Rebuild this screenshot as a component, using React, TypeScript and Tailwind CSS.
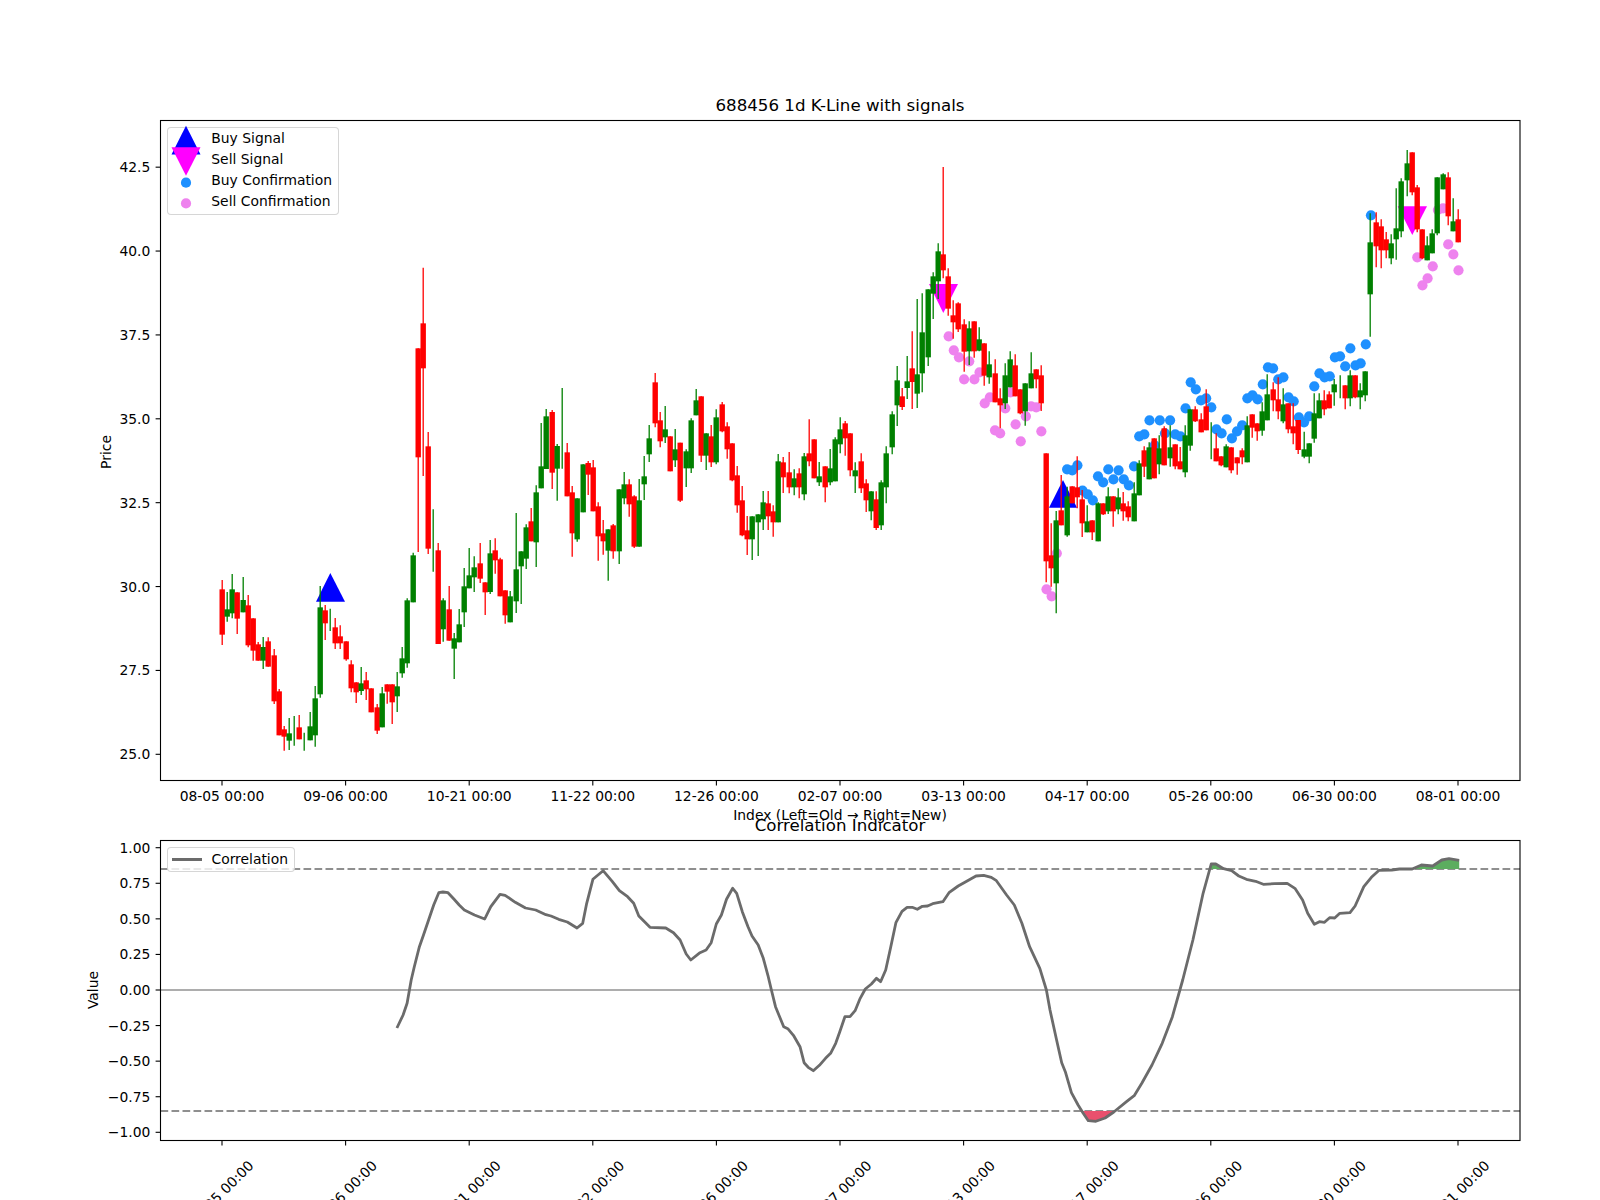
// Candle rows were read off 3x crops of the chart: "colour bodyTop bodyBottom wickTop wickBottom"
const parseRows = (y0: number, rows: string) =>
  rows
    .trim()
    .split('\n')
    .map(line => {
      const [c, top, bot, hi, lo] = line.trim().split(' ');
      const y = (v: string) => y0 + Number(v) / 3;
      return { up: c === 'g', top: y(top), bot: y(bot), hi: y(hi), lo: y(lo) };
    });

const candles = [
  ...parseRows(380, `r 628 764 600 795
g 688 710 636 725
g 628 700 582 715
r 637 716 637 762
g 660 697 591 697
r 676 796 645 802
r 715 812 715 842
r 793 842 786 842
g 801 842 771 867
r 784 860 772 860
r 826 964 807 972
r 934 1066 927 1066
r 1048 1070 1038 1112
g 1060 1082 1014 1110
g 1060 1060 1008 1097
r 1042 1078 1005 1078
g 1085 1085 1058 1112
g 1039 1081 996 1081
g 955 1066 918 1100
g 682 943 618 953
r 691 730 675 780
g 720 720 686 753
r 742 790 714 807
r 769 790 736 807
r 784 838 784 842
r 853 925 841 937
r 907 937 907 969
g 910 933 861 945
r 901 928 876 960
r 925 997 925 997
r 982 1052 972 1062
g 940 1042 921 1042
r 913 935 913 971
r 913 967 913 1032
g 919 949 876 996
g 835 880 801 893
g 661 850 655 863
g 526 667 518 667
r -95 232 -95 516
r -170 -35 -337 288
r 199 506 156 522
g 480 480 388 575
r 511 792 489 792
g 661 748 655 785
r 688 782 618 782
g 775 806 759 897
g 733 787 687 787
g 619 697 564 741
g 586 625 504 625
g 562 592 529 636
r 550 596 489 609
r 607 637 607 705
g 520 636 480 642
r 511 541 475 581
r 538 649 533 649
r 631 706 631 731
g 649 727 633 727
g 568 664 399 699
g 514 559 514 672
g 442 536 433 567
r 424 484 384 484
g 337 487 316 561
g 259 325 129 325
g 109 267 87 267`),
  ...parseRows(340, `r 216 398 210 447
g 318 386 312 482
g 384 384 144 386
r 337 469 309 469
r 457 580 438 650
g 475 598 475 605
g 373 517 373 517
r 369 404 363 465
r 382 514 360 514
r 499 589 487 662
r 580 604 540 644
g 568 632 568 722
r 556 634 552 656
g 448 634 448 672
g 433 475 396 493
r 433 493 418 530
r 469 620 466 624
g 481 620 417 620
g 409 433 348 480
g 295 343 255 366
r 127 250 99 262
r 241 304 216 322
g 268 292 198 309
r 289 394 289 394
g 328 361 267 381
r 308 482 308 486
g 334 385 328 441
g 241 385 235 399
g 181 226 147 226
r 169 347 169 366
g 280 347 280 390
r 289 367 255 381
g 232 367 208 373
r 193 274 186 277
r 259 328 247 356
r 310 421 310 424
r 406 496 378 518
r 481 586 438 589
r 571 598 528 645
g 529 598 529 660
g 523 547 523 648
g 487 538 453 570
r 490 529 453 570
r 514 547 496 590
g 364 547 342 547
r 367 412 351 459
r 397 442 336 460
g 415 442 388 466
r 400 442 385 475
g 349 463 339 481
r 340 364 238 379
r 298 415 298 415
g 409 427 366 438
r 379 442 379 487
g 385 427 327 436
g 298 424 292 424
g 268 313 232 340
r 250 295 243 347
r 280 391 280 409
g 391 409 367 459
r 364 445 340 459
r 430 481 418 516
g 454 514 454 541
r 478 564 454 570
g 427 556 421 570
g 340 442 319 490
g 223 322 214 343
g 121 196 78 258`),
  ...parseRows(150, `r 739 771 714 780
g 694 714 618 747
r 655 696 544 777
g 673 731 447 774
g 547 670 430 727
g 418 622 418 648
g 379 431 367 507
g 304 394 280 447
r 313 361 51 385
r 379 476 355 497
r 496 517 451 566
r 460 538 457 546
r 523 605 508 665
g 535 604 514 645
r 514 604 514 623
g 568 602 532 604
r 580 677 580 707
g 643 682 604 701
r 670 757 628 757
r 745 766 715 835
g 676 760 640 777
g 628 712 604 712
r 646 739 613 739
r 718 790 718 793
g 700 784 700 827
g 670 715 607 715
r 658 688 658 715
r 676 760 646 783`),
  ...parseRows(340, `r 340 664 340 727
r 646 685 550 740
g 541 730 513 820
r 511 556 405 556
g 469 586 440 590
r 439 490 439 490
r 442 472 349 505
r 478 550 450 591
g 544 577 496 577
r 541 577 541 600
g 490 604 487 604
r 490 523 490 525
g 469 514 442 522
r 469 514 469 560
g 472 508 445 523
r 490 514 456 542
r 499 532 484 544
g 460 544 427 544
g 370 466 361 466
r 331 380 319 411
g 322 418 307 418
r 295 415 295 415
g 325 373 286 403
r 265 376 259 376
g 322 355 256 380
r 313 379 313 388
r 364 388 321 388
g 286 397 256 412
g 208 317 208 332
r 208 244 199 246
r 238 277 220 277
r 199 271 148 271
g 300 300 247 358
r 325 364 280 364
r 349 376 349 379
g 319 382 313 382
r 322 391 322 400
r 352 370 352 404
r 331 352 325 373`),
  ...parseRows(130, `g 886 997 859 997
r 853 893 853 923
r 880 904 880 932
g 844 902 817 917
g 793 871 733 871
r 778 811 757 844
r 808 844 742 868
g 823 874 775 880
r 820 898 820 910
r 889 910 820 943
r 870 960 870 972
g 958 980 905 985
g 940 980 940 1000
g 850 926 790 938
g 811 865 790 865
r 811 838 781 856
r 793 835 784 835
g 763 787 747 827
g 770 770 736 805
r 766 805 766 838
g 736 805 721 829
r 736 802 736 805
g 781 802 760 838
g 724 796 724 814
g 337 493 250 620
r 277 349 247 412
r 289 361 268 415
r 328 361 306 385
g 340 385 313 403
g 295 328 175 389
g 154 304 145 322
g 100 151 60 199
r 67 187 67 196
r 172 298 165 307
r 298 385 298 388
g 346 391 319 391
g 310 370 298 370
g 142 310 142 316
g 133 178 130 178
r 142 259 127 286
g 274 304 205 304
r 268 337 238 337`),
];

const barX = (i: number) => 222 + 5.15 * i;

const dots = (start: number, y0: number, ys: number[]) =>
  ys.map((y, k) => ({ x: barX(start + k), y: y0 + y / 3 }));

const sellDots = [
  ...dots(141, 150, [559, 601, 622, 688, 634, 688, 667, 760, 742, 841, 850, 775, 727, 823, 874, 799, 769, 772, 844]),
  ...dots(160, 340, [748, 769, 640]),
  ...dots(232, 130, [382, 466, 445, 409, 240, 235, 343, 373, 421]),
];

const buyDots = [
  ...dots(164, 340, [388, 391, 376, 452, 463, 481, 409, 427, 388, 418, 391, 418, 436, 379, 289, 283, 241, 316, 241, 280, 241, 283, 289, 205, 127, 148, 181, 175, 202, 268, 280, 238, 295, 274, 256]),
  ...dots(199, 130, [805, 796, 808, 763, 712, 715, 748, 742, 802, 814, 862, 877, 859, 769, 730, 742, 739, 682, 679, 709, 655, 706, 700, 643, 256]),
];

// crop scale: 1.96x across, 3x down
const curvePoint = (x0: number) => ([x, y]: number[]) => `${(x0 + x / 1.96).toFixed(1)},${(790 + y / 3).toFixed(1)}`;

const corrPoints = [
  ...[
    [778, 714], [790, 675], [798, 640], [806, 570], [812, 530], [822, 470], [830, 435], [840, 390], [850, 345], [860, 308],
    [868, 306], [878, 308], [890, 328], [900, 345], [910, 360], [930, 375], [950, 387], [962, 350], [980, 313], [990, 316],
    [1010, 337], [1030, 354], [1050, 360], [1070, 374], [1080, 378], [1095, 388], [1112, 396], [1131, 414], [1142, 400],
    [1150, 340], [1162, 268], [1182, 242], [1200, 274], [1214, 302], [1230, 320], [1242, 340], [1252, 378], [1274, 412],
    [1305, 414], [1320, 428], [1333, 450], [1345, 492], [1354, 510], [1372, 488], [1384, 480], [1394, 458], [1404, 402],
    [1414, 375], [1424, 328], [1436, 295], [1444, 310], [1455, 365], [1466, 410], [1474, 438], [1486, 465], [1496, 505],
    [1505, 556], [1512, 600], [1520, 650], [1528, 680], [1536, 710], [1544, 716], [1555, 736],
  ].map(curvePoint(0)),
  ...[
    [0, 770], [8, 818], [16, 832], [26, 842], [38, 826], [50, 805], [60, 790], [70, 760], [78, 725], [88, 680], [98, 680],
    [108, 662], [118, 625], [128, 597], [140, 582], [150, 565], [158, 575], [168, 540], [178, 470], [188, 398], [200, 364],
    [210, 352], [220, 352], [230, 358], [240, 349], [250, 348], [260, 341], [280, 335], [292, 308], [310, 288], [325, 275],
    [345, 258], [360, 256], [375, 262], [385, 272], [405, 315], [420, 345], [435, 400], [450, 470], [470, 535], [483, 600],
    [490, 660], [503, 750], [513, 818], [520, 845], [532, 908], [545, 945], [555, 970], [565, 992], [580, 994], [598, 984],
    [615, 966], [640, 935], [655, 917], [670, 880], [690, 825], [710, 760], [730, 680], [750, 570], [770, 450], [790, 310],
    [806, 222], [815, 222], [830, 236], [846, 242], [860, 258], [875, 268], [893, 274], [908, 283], [930, 281], [955, 280],
    [970, 295], [985, 330], [995, 370], [1008, 403], [1018, 395], [1028, 397], [1038, 383], [1048, 384], [1058, 370],
    [1078, 368], [1088, 348], [1105, 290], [1120, 262], [1135, 241], [1160, 240], [1175, 237], [1200, 237], [1218, 225],
    [1240, 228], [1258, 210], [1272, 206], [1292, 211],
  ].map(curvePoint(800)),
].join(' ');

const dates = ['08-05', '09-06', '10-21', '11-22', '12-26', '02-07', '03-13', '04-17', '05-26', '06-30', '08-01'];
const priceTicks = [25, 27.5, 30, 32.5, 35, 37.5, 40, 42.5];
const valueTicks = [1, 0.75, 0.5, 0.25, 0, -0.25, -0.5, -0.75, -1];
const priceY = (p: number) => 754.3 - (p - 25) * 33.55;
const valueY = (v: number) => 990 - 142.3 * v;
const tickX = (k: number) => barX(k * 24);
const upperBand = 869;
const lowerBand = 1111;
const firstX = corrPoints.split(',')[0];
const lastX = corrPoints.split(' ').slice(-1)[0].split(',')[0];

function Frame({ top }: { top: number }) {
  return (
    <rect x="160.5" y={top + 0.5} width="1359.5" height={top === 120 ? 660 : 300} fill="none" stroke="#000" strokeWidth="1.1" />
  );
}

function Title({ children }: { children: string }) {
  return <h2 className="h-[20px] w-[1360px] ml-[160px] text-center text-[16.67px] leading-[12px]">{children}</h2>;
}

function PricePanel() {
  return (
    <section className="relative h-[700px]">
      <svg className="block overflow-visible" width="1600" height="700" viewBox="0 120 1600 700" fontSize="13.89">
        <polygon points="330.3,573 316,601.7 345,601.7" fill="#0000ff" />
        <polygon points="1063,480 1049,507.7 1077,507.7" fill="#0000ff" />
        <polygon points="929,284 958,284 943.3,313" fill="#ff00ff" />
        <polygon points="1397.7,206.3 1427,206.3 1412.3,235" fill="#ff00ff" />
        {buyDots.map((d, k) => (
          <circle key={k} cx={d.x + 0.5} cy={d.y} r="5.1" fill="#1e90ff" />
        ))}
        {sellDots.map((d, k) => (
          <circle key={k} cx={d.x + 0.5} cy={d.y} r="5.1" fill="#ee82ee" />
        ))}
        {candles.map((c, i) => {
          const color = c.up ? '#008000' : '#ff0000';
          const x = Math.round(barX(i));
          return (
            <g key={i}>
              <line x1={x + 0.2} x2={x + 0.2} y1={c.hi} y2={c.lo} stroke={color} strokeWidth="1.3" />
              <rect x={x - 2.5} y={c.top} width="5.4" height={c.bot - c.top} fill={color} />
            </g>
          );
        })}
        <Frame top={120} />
        {dates.map((d, k) => (
          <g key={d}>
            <line x1={tickX(k)} x2={tickX(k)} y1="780.5" y2="785.4" stroke="#000" strokeWidth="1.1" />
            <text x={tickX(k)} y="801" textAnchor="middle">{d} 00:00</text>
          </g>
        ))}
        {priceTicks.map(p => (
          <g key={p}>
            <line x1="155.6" x2="160.5" y1={priceY(p)} y2={priceY(p)} stroke="#000" strokeWidth="1.1" />
            <text x="150.3" y={priceY(p) + 5} textAnchor="end">{p.toFixed(1)}</text>
          </g>
        ))}
        <text x="840" y="820" textAnchor="middle">Index (Left=Old → Right=New)</text>
        <text transform="translate(111 452) rotate(-90)" textAnchor="middle">Price</text>
      </svg>
      <div className="absolute left-[167.3px] top-[7.3px] w-[172px] h-[88px] rounded-[4px] border border-[#cccccc]/80 bg-white/80 pl-[4px] text-[13.89px] leading-[20.85px]">
        <div className="flex h-[20.85px] gap-[9px]">
          <svg className="w-[30px] h-[21px] shrink-0 overflow-visible" viewBox="0 0 30 21">
            <polygon points="14,-2.3 28.5,26.4 -0.5,26.4" fill="#0000ff" />
          </svg>
          <span>Buy Signal</span>
        </div>
        <div className="flex h-[20.85px] gap-[9px]">
          <svg className="w-[30px] h-[21px] shrink-0 overflow-visible" viewBox="0 0 30 21">
            <polygon points="-0.5,-1.85 28.5,-1.85 14,26.85" fill="#ff00ff" />
          </svg>
          <span>Sell Signal</span>
        </div>
        <div className="flex h-[20.85px] gap-[9px]">
          <svg className="w-[30px] h-[21px] shrink-0 overflow-visible" viewBox="0 0 30 21">
            <circle cx="14" cy="12.7" r="5.1" fill="#1e90ff" />
          </svg>
          <span>Buy Confirmation</span>
        </div>
        <div className="flex h-[20.85px] gap-[9px]">
          <svg className="w-[30px] h-[21px] shrink-0 overflow-visible" viewBox="0 0 30 21">
            <circle cx="14" cy="12.45" r="5.1" fill="#ee82ee" />
          </svg>
          <span>Sell Confirmation</span>
        </div>
      </div>
    </section>
  );
}

function CorrelationPanel() {
  return (
    <section className="relative h-[360px]">
      <svg className="block overflow-visible" width="1600" height="360" viewBox="0 840 1600 360" fontSize="13.89">
        <defs>
          <clipPath id="aboveBand">
            <rect x="160" y="840" width="1360" height={upperBand - 840} />
          </clipPath>
          <clipPath id="belowBand">
            <rect x="160" y={lowerBand} width="1360" height={1140 - lowerBand} />
          </clipPath>
        </defs>
        <line x1="160.5" x2="1520" y1={valueY(0)} y2={valueY(0)} stroke="#adadad" strokeWidth="2" />
        <line x1="160.5" x2="1520" y1={upperBand} y2={upperBand} stroke="#8f8f8f" strokeWidth="2" strokeDasharray="7.7 3.3" />
        <line x1="160.5" x2="1520" y1={lowerBand} y2={lowerBand} stroke="#8f8f8f" strokeWidth="2" strokeDasharray="7.7 3.3" />
        <polygon points={`${corrPoints} ${lastX},${upperBand} ${firstX},${upperBand}`} fill="#5cad5f" clipPath="url(#aboveBand)" />
        <polygon points={`${corrPoints} ${lastX},${lowerBand} ${firstX},${lowerBand}`} fill="#e9506d" clipPath="url(#belowBand)" />
        <polyline points={corrPoints} fill="none" stroke="#6b6b6b" strokeWidth="2.8" strokeLinejoin="round" />
        <Frame top={840} />
        {dates.map((d, k) => (
          <g key={d}>
            <line x1={tickX(k)} x2={tickX(k)} y1="1140.5" y2="1145.4" stroke="#000" strokeWidth="1.1" />
            <text transform={`translate(${tickX(k) - 1} 1193) rotate(-45)`} textAnchor="middle" dominantBaseline="central">
              {d} 00:00
            </text>
          </g>
        ))}
        {valueTicks.map(v => (
          <g key={v}>
            <line x1="155.6" x2="160.5" y1={valueY(v)} y2={valueY(v)} stroke="#000" strokeWidth="1.1" />
            <text x="150.3" y={valueY(v) + 5} textAnchor="end">{v.toFixed(2).replace('-', '−')}</text>
          </g>
        ))}
        <text transform="translate(98 990) rotate(-90)" textAnchor="middle">Value</text>
      </svg>
      <div className="absolute left-[167.3px] top-[7.3px] flex h-[25px] w-[128px] items-center gap-[9.5px] rounded-[4px] border border-[#cccccc]/80 bg-white/80 pl-[4.2px] text-[13.89px]">
        <div className="h-[2.8px] w-[29.5px] bg-[#6b6b6b]" />
        <span>Correlation</span>
      </div>
    </section>
  );
}

export default function App() {
  return (
    <div className="h-[1200px] w-[1600px] overflow-hidden bg-white pt-[100px] text-black font-['DejaVu_Sans',sans-serif]">
      <Title>688456 1d K-Line with signals</Title>
      <PricePanel />
      <Title>Correlation Indicator</Title>
      <CorrelationPanel />
    </div>
  );
}
